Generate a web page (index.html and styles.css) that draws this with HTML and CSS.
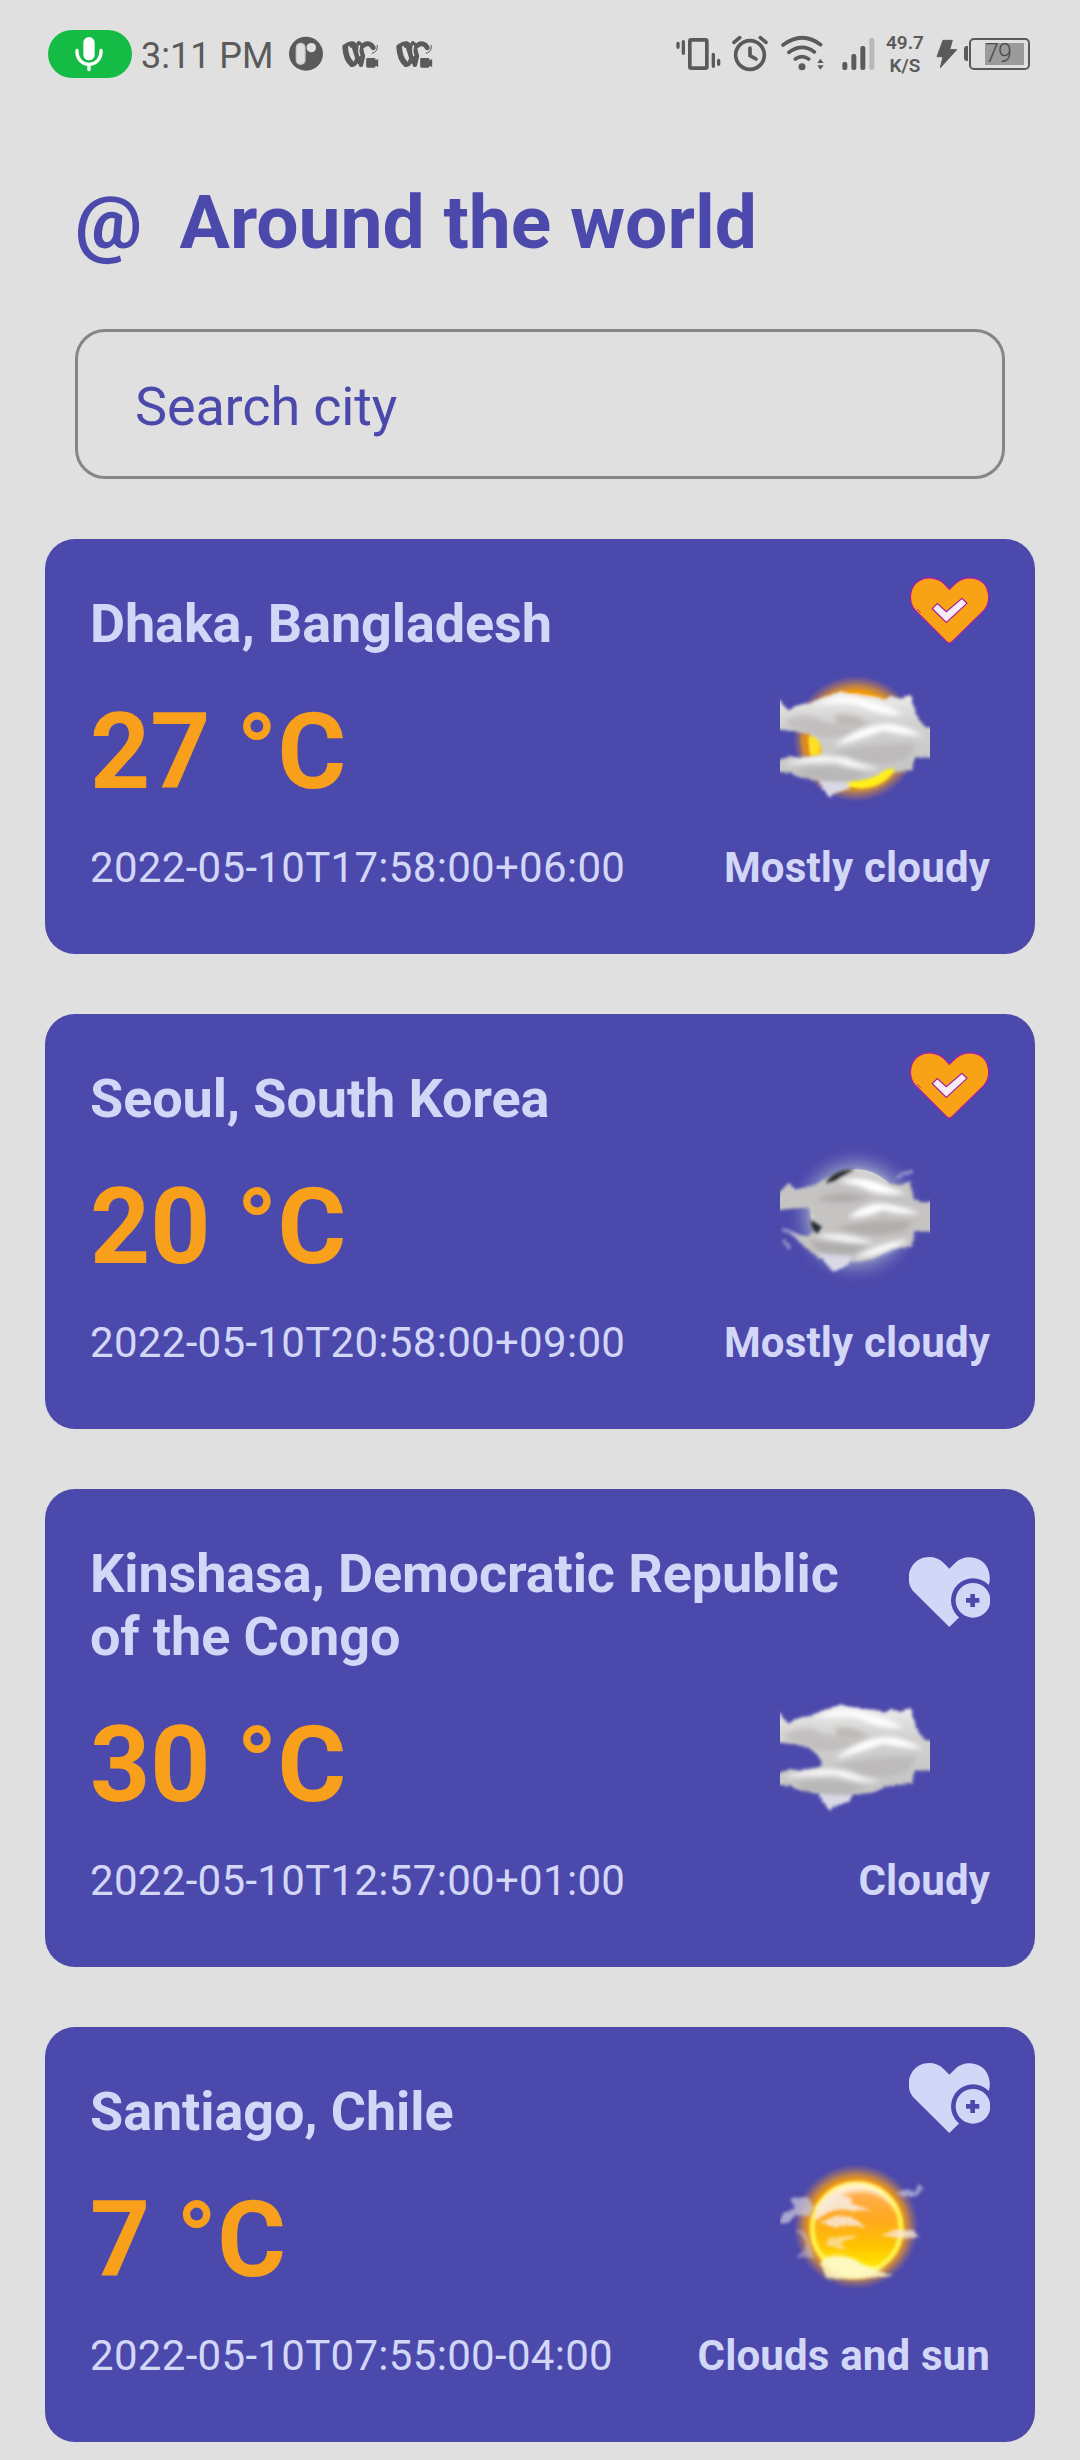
FILE: index.html
```html
<!DOCTYPE html>
<html lang="en">
<head>
<meta charset="utf-8">
<title>Around the world</title>
<link rel="stylesheet" href="styles.css">
</head>
<body>
<svg class="defs" width="0" height="0" aria-hidden="true">
  <defs>
    <filter id="wisp" x="-20%" y="-20%" width="140%" height="140%">
      <feTurbulence type="fractalNoise" baseFrequency="0.12" numOctaves="2" seed="4"/>
      <feDisplacementMap in="SourceGraphic" scale="12" xChannelSelector="R" yChannelSelector="G"/>
      <feGaussianBlur stdDeviation="4.5"/>
    </filter>
    <filter id="soft" x="-40%" y="-40%" width="180%" height="180%"><feGaussianBlur stdDeviation="8"/></filter>
    <filter id="soft-s" x="-40%" y="-40%" width="180%" height="180%"><feGaussianBlur stdDeviation="4"/></filter>
    <radialGradient id="halo">
      <stop offset="0.74" stop-color="#f59a08"/><stop offset="0.84" stop-color="#dd9030" stop-opacity=".75"/><stop offset="1" stop-color="#b07868" stop-opacity="0"/>
    </radialGradient>
    <radialGradient id="moonglow">
      <stop offset="0.6" stop-color="#c4cad6"/><stop offset="0.72" stop-color="#9096c2" stop-opacity=".7"/><stop offset="1" stop-color="#5a5bb4" stop-opacity="0"/>
    </radialGradient>
    <linearGradient id="disc" x1="0" y1="0" x2="0" y2="1">
      <stop offset="0" stop-color="#ffb060"/><stop offset=".4" stop-color="#ffa81c"/><stop offset=".7" stop-color="#ffc400"/><stop offset="1" stop-color="#fff200"/>
    </linearGradient>
    <linearGradient id="puff" x1="0" y1="0" x2="0" y2="1">
      <stop offset="0" stop-color="#eeeeed"/><stop offset=".35" stop-color="#d2d1d0"/><stop offset="1" stop-color="#c4c3c2"/>
    </linearGradient>
    <symbol id="cloud-layer" viewBox="120 405 450 450">
      <g filter="url(#wisp)">
        <path fill="#d9d9e6" d="M225 730L345 730L330 775L285 790L268 802L245 770Z"/>
        <path fill="url(#puff)" d="M100 500L118 508L145 542L175 526L215 516L255 500L300 486L345 494L400 500L440 510L452 496L478 506L512 492L520 525L536 568L556 592L595 590L595 684L525 682L515 722L440 730L400 748L330 756L235 752L180 742L150 728L90 724L90 700L150 678L180 684L240 674L246 655L228 632L205 612L170 604L125 600L90 592Z"/>
      </g>
      <g filter="url(#soft)">
        <path fill="#a9a6a4" opacity=".4" d="M135 570Q210 540 240 570L330 592L410 570L340 615L250 625L150 595Z"/>
        <path fill="#b5ada7" opacity=".7" d="M285 555Q330 545 380 574Q340 595 290 578Z"/>
        <path fill="#fff" d="M225 526Q300 484 380 512Q450 525 490 556Q410 556 355 525Q300 512 225 526Z"/>
        <path fill="#fff" d="M285 648Q350 590 430 582Q480 577 548 618Q480 613 430 602Q370 625 285 648Z"/>
        <path fill="#aaa9a8" opacity=".45" d="M270 670Q390 635 530 640L505 685Q400 720 330 680Z"/>
        <path fill="#fff" opacity=".95" d="M130 704Q220 667 315 684Q370 705 420 716Q350 722 290 697Q210 696 130 704Z"/>
        <path fill="#a8a7a6" opacity=".45" d="M175 720Q270 695 380 732L320 755Q230 755 175 735Z"/>
      </g>
    </symbol>
    <symbol id="heart-add" viewBox="507 126 243 297">
      <path fill="#d3d7f7" d="M628 164L611 147C592 128 562 124 539 136C504 154 496 203 519 231L628 339L736 233C758 207 753 156 720 138C695 124 665 128 646 146Z"/>
      <circle cx="699" cy="259" r="66" fill="#4c49ac"/>
      <circle cx="699" cy="259" r="52" fill="#d3d7f7"/>
      <path fill="#4c49ac" d="M691 240h14v12h13v14h-13v13h-14v-13h-13v-14h13z"/>
    </symbol>
    <symbol id="heart-checked" viewBox="507 132 243 297">
      <path fill="#f8a215" stroke="#b41aa6" stroke-width="3.500" d="M628 178L612 161C592 142 561 139 540 151C507 168 504 215 525 240L620 335Q628 343 636 335L732 241C754 215 750 166 717 150C695 139 665 142 646 161Z"/>
      <path fill="#f5edf5" stroke="#a31ca4" stroke-width="3.500" d="M577 236L592 221L619 245L666 205L681 220L619 277Z"/>
      <path fill="none" stroke="#a31ca4" stroke-width="2.500" d="M531 237L542 248"/>
    </symbol>
    <symbol id="reel" viewBox="936 60 110 150">
      <g fill="none" stroke="#5a5a5a" stroke-linecap="round" stroke-linejoin="round">
        <path stroke-width="17" d="M945 111C946 130 951 150 965 162"/>
        <path stroke-width="12" d="M948 106Q958 98 968 100M966 165Q980 162 979 146"/>
        <path stroke-width="21" d="M969 106C979 112 980 132 989 152"/>
        <path stroke-width="14" d="M986 100C996 104 990 124 998 138L992 164"/>
        <path stroke-width="15" d="M1000 106C1010 97 1023 101 1029 113"/>
        <path stroke-width="3" d="M1041 106Q1045 125 1026 130"/>
      </g>
      <path fill="none" stroke="#e0e0e0" stroke-width="4" stroke-linecap="round" d="M964 115Q963 134 973 146M988 107Q983 122 989 137"/>
      <path fill="#5a5a5a" d="M1012 144h20q4 0 4 4v3l8-4v24l-8-4v2q0 4-4 4h-20q-4 0-4-4v-21q0-4 4-4z"/>
    </symbol>
  </defs>
</svg>

<header class="status">
  <span class="mic-pill">
    <svg width="28" height="36" viewBox="136 78 84 108"><rect x="161" y="81" width="34" height="70" rx="17" fill="#fff"/><path d="M142 121v6a36 36 0 0 0 72 0v-6M178 164v15" fill="none" stroke="#fff" stroke-width="10" stroke-linecap="round"/></svg>
  </span>
  <span class="clock">3:11 PM</span>
  <svg class="app-dot" width="36" height="50" viewBox="774 60 108 150"><circle cx="828" cy="131" r="51" fill="#5a5a5a"/><rect x="797" y="98" width="30" height="67" rx="15" fill="#c9c9c9"/><rect x="801" y="102" width="22" height="59" rx="11" fill="#dedede"/><circle cx="844" cy="113" r="14" fill="#e0e0e0"/></svg>
  <svg class="app-reel" width="37" height="50"><use href="#reel"/></svg>
  <svg class="app-reel" width="37" height="50"><use href="#reel"/></svg>
  <div class="status-right">
    <svg width="45" height="50" viewBox="47 60 135 150"><rect x="88.500" y="89.500" width="51" height="85" rx="4" fill="none" stroke="#5a5a5a" stroke-width="11"/><path d="M53 100v12M69 95v35M159 133v36M175 151v12" stroke="#5a5a5a" stroke-width="10" stroke-linecap="round"/></svg>
    <svg class="alarm" width="36" height="50" viewBox="216 60 108 150"><g fill="none" stroke="#5a5a5a" stroke-width="11" stroke-linecap="round" stroke-linejoin="round"><circle cx="270" cy="135" r="43"/><path d="M222 97L239 83M301 83L318 97"/><path d="M270 114v23l18 10"/></g></svg>
    <svg class="wifi" width="43" height="50" viewBox="362 60 129 150"><g fill="none" stroke="#5a5a5a" stroke-width="11" stroke-linecap="round"><path d="M368 105Q425 62 481 104M386 127Q425 98 462 126M405 147Q425 133 445 147"/></g><circle cx="425" cy="170" r="10.500" fill="#5a5a5a"/><path fill="#5a5a5a" d="M471 159L480 146L490 159ZM471 166H490L480 179Z"/></svg>
    <svg class="signal" width="33" height="50" viewBox="545 60 99 150"><g fill="#5a5a5a"><rect x="546" y="156" width="15" height="24" rx="6"/><rect x="573" y="132" width="15" height="48" rx="6"/><rect x="600" y="108" width="15" height="72" rx="6"/><rect x="627" y="84" width="15" height="96" rx="6" fill="#b9b9b9"/></g></svg>
    <div class="speed">49.7<br>K/S</div>
    <svg class="bolt" width="22" height="50" viewBox="831 60 66 150"><path fill="#5a5a5a" stroke="#5a5a5a" stroke-width="3" stroke-linejoin="round" d="M852 91H880L872 119H893L844 173L852 140H834Z"/></svg>
    <div class="battery"><span class="battery-level">79</span></div>
  </div>
</header>

<main class="page">
  <h1 class="title">@  Around the world</h1>
  <div class="search">Search city</div>

  <section class="cards">
    <article class="card">
      <div class="row"><h2 class="city">Dhaka, Bangladesh</h2><svg class="heart" width="81" height="99"><use href="#heart-checked"/></svg></div>
      <div class="row reading"><span class="temp">27 °C</span>
        <svg class="weather" width="150" height="150" viewBox="120 405 450 450">
          <circle cx="348" cy="626" r="190" fill="url(#halo)"/>
          <circle cx="348" cy="630" r="140" fill="url(#disc)"/>
          <use href="#cloud-layer" x="120" y="405" width="450" height="450"/>
          <path fill="#fff01a" filter="url(#soft-s)" d="M318 757Q360 762 415 735Q438 712 465 716Q440 764 380 774Q340 780 318 757Z"/>
          <path fill="#d98a1e" filter="url(#soft-s)" d="M182 618L208 612L206 680L190 668Z"/>
          <path fill="#ffe42c" opacity=".9" filter="url(#soft-s)" d="M204 620Q228 613 240 640L234 674H210Z"/>
        </svg>
      </div>
      <div class="row foot"><span class="time">2022-05-10T17:58:00+06:00</span><span class="cond">Mostly cloudy</span></div>
    </article>

    <article class="card">
      <div class="row"><h2 class="city">Seoul, South Korea</h2><svg class="heart" width="81" height="99"><use href="#heart-checked"/></svg></div>
      <div class="row reading"><span class="temp">20 °C</span>
        <svg class="weather" width="150" height="150" viewBox="120 390 450 450">
          <circle cx="348" cy="615" r="205" fill="url(#moonglow)"/>
          <circle cx="348" cy="613" r="135" fill="#d4d4d2"/>
          <g filter="url(#wisp)">
            <path fill="#c6c4c3" d="M120 545L145 519L165 538L215 528L245 512L300 492L390 498L440 520L480 525L510 512L520 566L550 580L590 568L590 668L525 662L515 710L450 715L400 745L340 755L240 745L205 720L180 696L150 668L200 678L225 665L218 620L205 592L90 602Z"/>
            <path fill="#d9d9e6" d="M230 728L335 738L325 765L280 786Z"/>
            <path fill="none" stroke="#b9bbdf" stroke-width="11" opacity=".6" d="M470 505L490 490L518 485M125 658L160 670L180 692M130 690L150 715"/>
          </g>
          <g filter="url(#soft)">
            <path fill="#fff" d="M295 512Q370 490 445 530L500 550Q420 562 360 530Z"/>
            <path fill="#fff" d="M325 620Q390 570 440 582Q490 590 540 610Q470 615 430 600Q370 628 325 620Z"/>
            <path fill="#999593" opacity=".45" d="M290 655Q400 620 520 635L490 665Q380 690 290 655Z"/>
            <path fill="#fff" opacity=".9" d="M225 677Q310 662 405 700Q310 700 225 677ZM340 745Q430 690 505 690Q450 735 340 745Z"/>
            <path fill="#979492" opacity=".45" d="M205 690L390 705L340 735L240 730ZM225 570Q300 530 390 565L310 580Z"/>
          </g>
          <path fill="#282a31" filter="url(#soft-s)" d="M256 520Q285 474 345 480Q305 496 285 512ZM214 630Q230 642 246 650L232 671Q209 658 214 630Z"/>
        </svg>
      </div>
      <div class="row foot"><span class="time">2022-05-10T20:58:00+09:00</span><span class="cond">Mostly cloudy</span></div>
    </article>

    <article class="card">
      <div class="row"><h2 class="city">Kinshasa, Democratic Republic of the Congo</h2><svg class="heart" width="81" height="99"><use href="#heart-add"/></svg></div>
      <div class="row reading"><span class="temp">30 °C</span>
        <svg class="weather" width="150" height="150"><use href="#cloud-layer"/></svg>
      </div>
      <div class="row foot"><span class="time">2022-05-10T12:57:00+01:00</span><span class="cond">Cloudy</span></div>
    </article>

    <article class="card">
      <div class="row"><h2 class="city">Santiago, Chile</h2><svg class="heart" width="81" height="99"><use href="#heart-add"/></svg></div>
      <div class="row reading"><span class="temp">7 °C</span>
        <svg class="weather" width="150" height="150" viewBox="120 399 450 450">
          <circle cx="348" cy="620" r="188" fill="url(#halo)"/>
          <circle cx="350" cy="626" r="134" fill="url(#disc)"/>
          <circle cx="350" cy="626" r="133" fill="none" stroke="#fff04e" stroke-width="15" filter="url(#soft-s)"/>
          <path fill="#fff" opacity=".75" filter="url(#soft)" d="M232 590Q250 495 350 488Q440 492 475 580Q430 510 350 515Q290 520 232 590Z"/>
          <path fill="#fffdb0" opacity=".9" filter="url(#soft)" d="M245 722Q290 690 350 725Q400 755 440 742Q360 792 285 764Z"/>
          <g filter="url(#wisp)" fill="#f8eadb">
            <path opacity=".9" d="M232 556L262 530L300 521L338 538L330 548L395 572L340 572L300 568L270 575L222 600Z"/>
            <path opacity=".85" d="M240 608L285 588L335 590L378 622L320 616L285 622Z"/>
            <path opacity=".6" d="M270 652L355 645L325 660L300 668L320 690L255 675Z"/>
            <path opacity=".8" d="M425 645L470 628L520 630L538 652L480 654Z"/>
            <path fill="#fdf8c4" opacity=".85" d="M240 730Q270 700 340 718Q380 745 430 758L460 768L350 776L260 775Z"/>
            <path fill="#c9c7dc" opacity=".75" d="M150 535L200 530L222 560L210 590L165 585L145 610L115 610L130 580L165 565Z"/>
            <path fill="#c9c7dc" opacity=".5" d="M165 625L200 640L212 670L225 715L190 710L165 715L195 690L200 665Z"/>
            <path fill="#c5c3e2" opacity=".7" d="M468 520L500 508L525 516L535 490L547 505L530 528L490 530Z"/>
          </g>
        </svg>
      </div>
      <div class="row foot"><span class="time">2022-05-10T07:55:00-04:00</span><span class="cond">Clouds and sun</span></div>
    </article>
  </section>
</main>
</body>
</html>
```
FILE: styles.css
```css
* { box-sizing: border-box; }

body {
  margin: 0;
  width: 1080px;
  height: 2460px;
  overflow: hidden;
  background: #e0e0e0;
  font-family: Roboto, "Liberation Sans", sans-serif;
}

.defs { display: block; height: 0; }

.status {
  display: flex;
  align-items: flex-start;
  height: 108px;
  padding: 30px 50px 0 48px;
  color: #5a5a5a;
}

.status svg { flex: none; display: block; }

.mic-pill {
  display: flex;
  align-items: flex-start;
  justify-content: center;
  width: 84px;
  height: 48px;
  padding: 6px 2px 0 0;
  border-radius: 24px;
  background: #14bc46;
}

.clock {
  width: 138px;
  margin: 5px 0 0 9px;
  font-size: 36px;
  line-height: 42px;
  white-space: nowrap;
}

.app-dot { margin-left: 9px; }
.app-reel { margin-left: 18px; }
.app-reel + .app-reel { margin-left: 17px; }

.status-right { display: flex; margin-left: auto; }
.alarm { margin-left: 11px; }
.wifi { margin-left: 13px; }
.signal { margin-left: 18px; }

.speed {
  width: 40px;
  margin: 1px 0 0 10px;
  font-size: 19px;
  font-weight: 600;
  line-height: 23px;
  text-align: center;
  white-space: nowrap;
}

.bolt { margin-left: 11px; }

.battery {
  position: relative;
  width: 61px;
  height: 32px;
  margin: 8px 0 0 11px;
  padding: 3px 0 0 14px;
  border: 2px solid #5a5a5a;
  border-radius: 5px;
}

.battery::before {
  content: "";
  position: absolute;
  left: -7px;
  top: 6px;
  width: 4px;
  height: 15px;
  border-radius: 3px 0 0 3px;
  background: #5a5a5a;
}

.battery-level {
  display: block;
  width: 39px;
  height: 22px;
  background: #9b9b9b;
  color: #4c4c4c;
  font-size: 25px;
  font-weight: 300;
  line-height: 22px;
  letter-spacing: -0.8px;
}

.page { padding: 0 45px; }

.title {
  margin: 70px 30px 0;
  font-size: 75px;
  font-weight: 700;
  line-height: 88px;
  white-space: pre;
  color: #4c49ac;
}

.search {
  display: flex;
  align-items: center;
  height: 150px;
  margin: 63px 30px 0;
  padding: 5px 57px 0;
  border: 3px solid #868686;
  border-radius: 30px;
  font-size: 54px;
  line-height: 63px;
  letter-spacing: -0.15px;
  color: #4c49ac;
}

.cards {
  display: flex;
  flex-direction: column;
  gap: 60px;
  margin-top: 60px;
}

.card {
  display: flex;
  flex-direction: column;
  padding: 53px 45px 62px;
  border-radius: 30px;
  background: #4c49ac;
  color: #d3d7f7;
}

.row {
  display: flex;
  align-items: center;
  justify-content: space-between;
}

.city {
  width: 780px;
  margin: 0;
  font-size: 54px;
  font-weight: 700;
  line-height: 63px;
  letter-spacing: -0.12px;
}

.heart { flex: none; margin: -18px 0; }

.reading {
  align-items: flex-start;
  height: 123px;
  margin-top: 36px;
}

.temp {
  font-size: 105px;
  font-weight: 700;
  line-height: 123px;
  color: #f8a01b;
}

.weather {
  flex: none;
  margin: -26px 60px 0 0;
}

.foot {
  margin-top: 29px;
  font-size: 42px;
  line-height: 49px;
}

.time { letter-spacing: 0.31px; }

.cond {
  font-weight: 700;
  letter-spacing: 0.16px;
}
```
